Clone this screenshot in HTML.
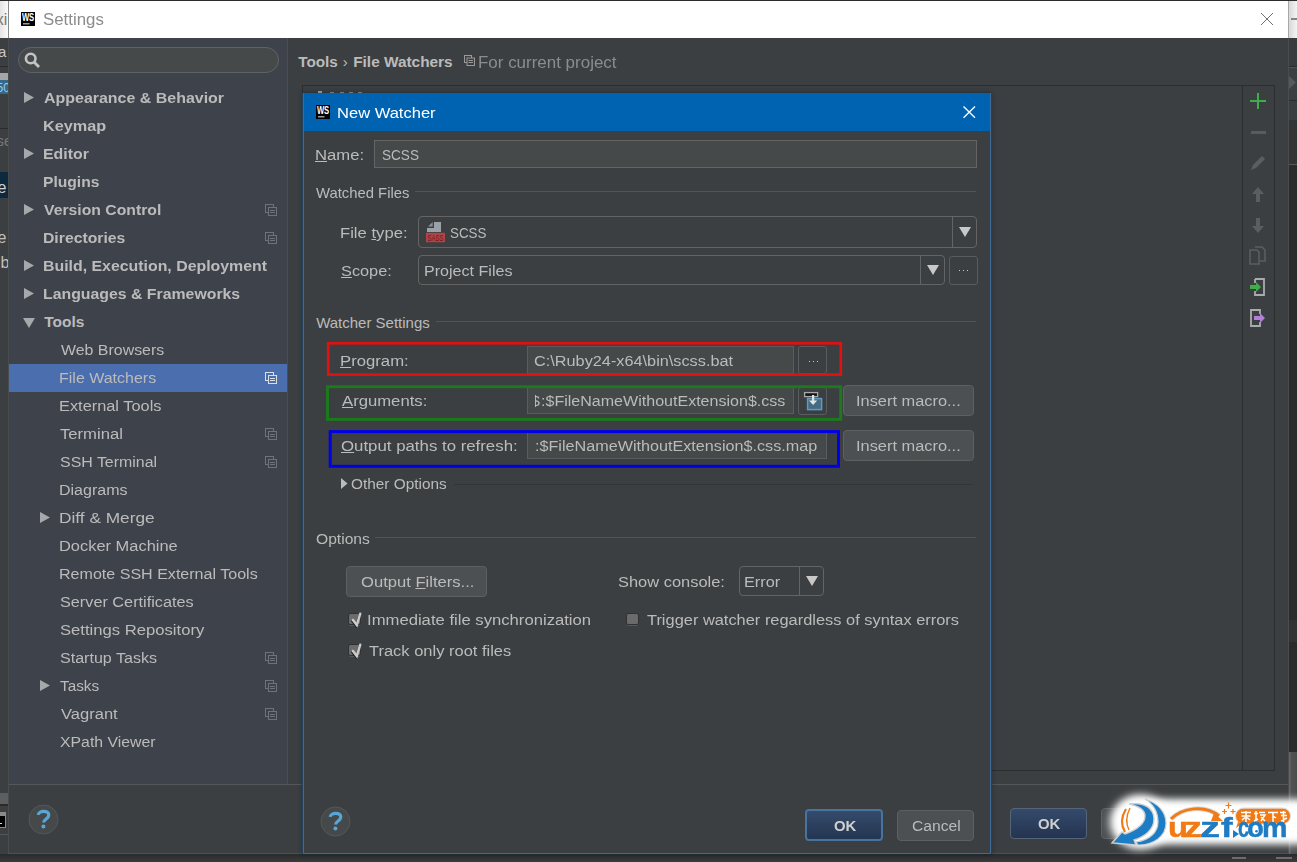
<!DOCTYPE html>
<html><head><meta charset="utf-8"><style>
html,body{margin:0;padding:0;width:1297px;height:862px;overflow:hidden;background:#3c3f41}
.r{position:absolute;display:block}
.t{position:absolute;white-space:pre;line-height:1;font-family:"Liberation Sans",sans-serif}
u{text-decoration:underline;text-underline-offset:1px}
</style></head><body>
<div class="r" style="left:0px;top:0px;width:1297px;height:862px;background:#3c3f41"></div>
<div class="r" style="left:0px;top:0px;width:1297px;height:1px;background:#2b2b2b"></div>
<div class="r" style="left:1289px;top:1px;width:8px;height:37px;background:linear-gradient(90deg,#d8d8d8,#f4f4f4)"></div>
<div class="r" style="left:1291px;top:18px;width:6px;height:1.5px;background:#858585"></div>
<div class="r" style="left:1289px;top:38px;width:8px;height:28px;background:#393c3e"></div>
<div class="r" style="left:1289px;top:66px;width:8px;height:1px;background:#2b2b2b"></div>
<div class="r" style="left:1289px;top:67px;width:8px;height:1px;background:#505355"></div>
<div class="r" style="left:1289px;top:68px;width:8px;height:32px;background:#3c3f41"></div>
<svg class="r" style="left:1289px;top:76px" width="8" height="13"><path d="M0 0L7 6.5L0 13Z" fill="#56595b"/></svg>
<div class="r" style="left:1289px;top:100px;width:8px;height:1px;background:#2b2b2b"></div>
<div class="r" style="left:1289px;top:101px;width:8px;height:19px;background:#3c3f41"></div>
<div class="r" style="left:1289px;top:120px;width:8px;height:44px;background:#323436"></div>
<div class="r" style="left:1289px;top:164px;width:8px;height:1px;background:#555759"></div>
<div class="r" style="left:1289px;top:165px;width:8px;height:587px;background:#2b2b2b"></div>
<div class="r" style="left:1289px;top:620px;width:8px;height:22px;background:#333333"></div>
<div class="r" style="left:1289px;top:752px;width:8px;height:110px;background:linear-gradient(90deg,#6a6c6e,#505254 30%,#4a4c4e)"></div>
<div class="r" style="left:0px;top:1px;width:8px;height:37px;background:linear-gradient(90deg,#e4e4e4,#fafafa)"></div>
<div class="t" style="left:-4.19px;top:12px;font-size:16px;font-weight:normal;color:#777;">xi</div>
<div class="r" style="left:0px;top:38px;width:8px;height:90px;background:#3c3f41"></div>
<div class="t" style="left:-2.13px;top:44px;font-size:15px;font-weight:normal;color:#c8c8c8;">a</div>
<div class="r" style="left:0px;top:66px;width:8px;height:1px;background:#2b2b2b"></div>
<div class="r" style="left:0px;top:73px;width:8px;height:7px;background:#a3a7ab"></div>
<div class="r" style="left:0px;top:80px;width:8px;height:14px;background:#36688a"></div>
<div class="t" style="left:-3.48px;top:82px;font-size:12px;font-weight:normal;color:#8fd0f5;">50</div>
<div class="r" style="left:0px;top:128px;width:8px;height:1px;background:#2b2b2b"></div>
<div class="t" style="left:-3.42px;top:133px;font-size:15px;font-weight:normal;color:#75787a;">se</div>
<div class="r" style="left:0px;top:172px;width:8px;height:26px;background:#0d293e"></div>
<div class="t" style="left:-6.09px;top:180px;font-size:16px;font-weight:normal;color:#d0d0d0;">le</div>
<div class="t" style="left:-6.09px;top:230px;font-size:16px;font-weight:normal;color:#c0c0c0;">le</div>
<div class="t" style="left:-3.06px;top:255px;font-size:16px;font-weight:normal;color:#c0c0c0;">ib</div>
<div class="r" style="left:0px;top:793px;width:8px;height:11px;background:#5c5e60"></div>
<div class="r" style="left:0px;top:804px;width:8px;height:2px;background:#2b2b2b"></div>
<div class="r" style="left:0px;top:812px;width:6px;height:16px;background:#8a8a8a"></div>
<div class="r" style="left:0px;top:816px;width:5px;height:11px;background:#000"></div>
<div class="r" style="left:0px;top:822.5px;width:2px;height:1.5px;background:#ddd"></div>
<div class="r" style="left:0px;top:834px;width:8px;height:1px;background:#555"></div>
<div class="r" style="left:8px;top:1px;width:1px;height:37px;background:#8a8a8a"></div>
<div class="r" style="left:8px;top:38px;width:1px;height:816px;background:#4a4c4e"></div>
<div class="r" style="left:9px;top:1px;width:1280px;height:37px;background:#ffffff"></div>
<div class="r" style="left:1288px;top:1px;width:1px;height:37px;background:#a8a8a8"></div>
<div class="r" style="left:1288px;top:38px;width:1px;height:816px;background:#4a4c4e"></div>
<svg class="r" style="left:21px;top:12px" width="14" height="14"><rect width="14" height="14" fill="#000"/><text x="0.9" y="9.2" font-family="Liberation Sans" font-weight="bold" font-size="10.4" fill="#fff" textLength="12.3" lengthAdjust="spacingAndGlyphs">WS</text><rect x="2" y="11" width="6.5" height="1.5" fill="#9a9a9a"/></svg>
<div class="t" style="left:42.73px;top:12px;font-size:16px;font-weight:normal;color:#8c8c8c;transform:scaleX(1.0529);transform-origin:0 0;">Settings</div>
<svg class="r" style="left:1260px;top:12px" width="14" height="14"><path d="M1 1L13 13M13 1L1 13" stroke="#707070" stroke-width="1"/></svg>
<div class="r" style="left:9px;top:38px;width:278px;height:746px;background:#3e434b"></div>
<div class="r" style="left:287px;top:38px;width:1px;height:746px;background:#4a4e53"></div>
<div class="r" style="left:18px;top:47px;width:261px;height:26px;background:#45494a;border:1px solid #5f6367;border-radius:13px;box-sizing:border-box"></div>
<svg class="r" style="left:22px;top:50px" width="20" height="20"><circle cx="8.7" cy="8.5" r="4.8" fill="none" stroke="#c3c3c3" stroke-width="2.6"/><path d="M12 12L17 17" stroke="#c3c3c3" stroke-width="2.8"/></svg>
<div class="t" style="left:44.09px;top:90px;font-size:15.5px;font-weight:bold;color:#bbbbbb;transform:scaleX(1.0297);transform-origin:0 0;">Appearance &amp; Behavior</div>
<svg class="r" style="left:24px;top:92px" width="11" height="12"><path d="M0 0L10 5.5L0 11Z" fill="#a6a9ac"/></svg>
<div class="t" style="left:43.43px;top:118px;font-size:15.5px;font-weight:bold;color:#bbbbbb;transform:scaleX(1.0486);transform-origin:0 0;">Keymap</div>
<div class="t" style="left:43.45px;top:146px;font-size:15.5px;font-weight:bold;color:#bbbbbb;transform:scaleX(1.0247);transform-origin:0 0;">Editor</div>
<svg class="r" style="left:24px;top:148px" width="11" height="12"><path d="M0 0L10 5.5L0 11Z" fill="#a6a9ac"/></svg>
<div class="t" style="left:43.47px;top:174px;font-size:15.5px;font-weight:bold;color:#bbbbbb;transform:scaleX(1.0084);transform-origin:0 0;">Plugins</div>
<div class="t" style="left:44.41px;top:202px;font-size:15.5px;font-weight:bold;color:#bbbbbb;transform:scaleX(1.0163);transform-origin:0 0;">Version Control</div>
<svg class="r" style="left:24px;top:204px" width="11" height="12"><path d="M0 0L10 5.5L0 11Z" fill="#a6a9ac"/></svg>
<svg class="r" style="left:265px;top:204px" width="12" height="12"><rect x="0.5" y="0.5" width="8" height="8" fill="none" stroke="#6f7276" stroke-width="1"/><rect x="3.5" y="3.5" width="8" height="8" fill="#3e434b" stroke="#6f7276" stroke-width="1"/><path d="M5 6.5H10M5 8.5H10" stroke="#6f7276" stroke-width="1"/></svg>
<div class="t" style="left:43.46px;top:230px;font-size:15.5px;font-weight:bold;color:#bbbbbb;transform:scaleX(1.0160);transform-origin:0 0;">Directories</div>
<svg class="r" style="left:265px;top:232px" width="12" height="12"><rect x="0.5" y="0.5" width="8" height="8" fill="none" stroke="#6f7276" stroke-width="1"/><rect x="3.5" y="3.5" width="8" height="8" fill="#3e434b" stroke="#6f7276" stroke-width="1"/><path d="M5 6.5H10M5 8.5H10" stroke="#6f7276" stroke-width="1"/></svg>
<div class="t" style="left:43.45px;top:258px;font-size:15.5px;font-weight:bold;color:#bbbbbb;transform:scaleX(1.0241);transform-origin:0 0;">Build, Execution, Deployment</div>
<svg class="r" style="left:24px;top:260px" width="11" height="12"><path d="M0 0L10 5.5L0 11Z" fill="#a6a9ac"/></svg>
<div class="t" style="left:43.45px;top:286px;font-size:15.5px;font-weight:bold;color:#bbbbbb;transform:scaleX(1.0219);transform-origin:0 0;">Languages &amp; Frameworks</div>
<svg class="r" style="left:24px;top:288px" width="11" height="12"><path d="M0 0L10 5.5L0 11Z" fill="#a6a9ac"/></svg>
<div class="t" style="left:44.31px;top:314px;font-size:15.5px;font-weight:bold;color:#bbbbbb;">Tools</div>
<svg class="r" style="left:23px;top:318px" width="13" height="11"><path d="M0 0L12 0L6 10Z" fill="#a6a9ac"/></svg>
<div class="t" style="left:60.74px;top:342px;font-size:15.5px;font-weight:normal;color:#bbbbbb;transform:scaleX(1.0272);transform-origin:0 0;">Web Browsers</div>
<div class="r" style="left:9px;top:364px;width:278px;height:28px;background:#4b6eaf"></div>
<div class="t" style="left:59.49px;top:370px;font-size:15.5px;font-weight:normal;color:#bbbbbb;transform:scaleX(1.0320);transform-origin:0 0;">File Watchers</div>
<svg class="r" style="left:265px;top:372px" width="12" height="12"><rect x="0.5" y="0.5" width="8" height="8" fill="none" stroke="#d8dde6" stroke-width="1"/><rect x="3.5" y="3.5" width="8" height="8" fill="#4b6eaf" stroke="#d8dde6" stroke-width="1"/><path d="M5 6.5H10M5 8.5H10" stroke="#d8dde6" stroke-width="1"/></svg>
<div class="t" style="left:59.46px;top:398px;font-size:15.5px;font-weight:normal;color:#bbbbbb;transform:scaleX(1.0553);transform-origin:0 0;">External Tools</div>
<div class="t" style="left:60.43px;top:426px;font-size:15.5px;font-weight:normal;color:#bbbbbb;transform:scaleX(1.0735);transform-origin:0 0;">Terminal</div>
<svg class="r" style="left:265px;top:428px" width="12" height="12"><rect x="0.5" y="0.5" width="8" height="8" fill="none" stroke="#6f7276" stroke-width="1"/><rect x="3.5" y="3.5" width="8" height="8" fill="#3e434b" stroke="#6f7276" stroke-width="1"/><path d="M5 6.5H10M5 8.5H10" stroke="#6f7276" stroke-width="1"/></svg>
<div class="t" style="left:60.07px;top:454px;font-size:15.5px;font-weight:normal;color:#bbbbbb;transform:scaleX(1.0278);transform-origin:0 0;">SSH Terminal</div>
<svg class="r" style="left:265px;top:456px" width="12" height="12"><rect x="0.5" y="0.5" width="8" height="8" fill="none" stroke="#6f7276" stroke-width="1"/><rect x="3.5" y="3.5" width="8" height="8" fill="#3e434b" stroke="#6f7276" stroke-width="1"/><path d="M5 6.5H10M5 8.5H10" stroke="#6f7276" stroke-width="1"/></svg>
<div class="t" style="left:59.49px;top:482px;font-size:15.5px;font-weight:normal;color:#bbbbbb;transform:scaleX(1.0329);transform-origin:0 0;">Diagrams</div>
<div class="t" style="left:59.38px;top:510px;font-size:15.5px;font-weight:normal;color:#bbbbbb;transform:scaleX(1.1146);transform-origin:0 0;">Diff &amp; Merge</div>
<svg class="r" style="left:40px;top:512px" width="11" height="12"><path d="M0 0L10 5.5L0 11Z" fill="#a6a9ac"/></svg>
<div class="t" style="left:59.45px;top:538px;font-size:15.5px;font-weight:normal;color:#bbbbbb;transform:scaleX(1.0598);transform-origin:0 0;">Docker Machine</div>
<div class="t" style="left:59.48px;top:566px;font-size:15.5px;font-weight:normal;color:#bbbbbb;transform:scaleX(1.0358);transform-origin:0 0;">Remote SSH External Tools</div>
<div class="t" style="left:60.05px;top:594px;font-size:15.5px;font-weight:normal;color:#bbbbbb;transform:scaleX(1.0483);transform-origin:0 0;">Server Certificates</div>
<div class="t" style="left:60.03px;top:622px;font-size:15.5px;font-weight:normal;color:#bbbbbb;transform:scaleX(1.0738);transform-origin:0 0;">Settings Repository</div>
<div class="t" style="left:60.06px;top:650px;font-size:15.5px;font-weight:normal;color:#bbbbbb;transform:scaleX(1.0363);transform-origin:0 0;">Startup Tasks</div>
<svg class="r" style="left:265px;top:652px" width="12" height="12"><rect x="0.5" y="0.5" width="8" height="8" fill="none" stroke="#6f7276" stroke-width="1"/><rect x="3.5" y="3.5" width="8" height="8" fill="#3e434b" stroke="#6f7276" stroke-width="1"/><path d="M5 6.5H10M5 8.5H10" stroke="#6f7276" stroke-width="1"/></svg>
<div class="t" style="left:60.46px;top:678px;font-size:15.5px;font-weight:normal;color:#bbbbbb;transform:scaleX(0.9892);transform-origin:0 0;">Tasks</div>
<svg class="r" style="left:40px;top:680px" width="11" height="12"><path d="M0 0L10 5.5L0 11Z" fill="#a6a9ac"/></svg>
<svg class="r" style="left:265px;top:680px" width="12" height="12"><rect x="0.5" y="0.5" width="8" height="8" fill="none" stroke="#6f7276" stroke-width="1"/><rect x="3.5" y="3.5" width="8" height="8" fill="#3e434b" stroke="#6f7276" stroke-width="1"/><path d="M5 6.5H10M5 8.5H10" stroke="#6f7276" stroke-width="1"/></svg>
<div class="t" style="left:60.73px;top:706px;font-size:15.5px;font-weight:normal;color:#bbbbbb;transform:scaleX(1.0671);transform-origin:0 0;">Vagrant</div>
<svg class="r" style="left:265px;top:708px" width="12" height="12"><rect x="0.5" y="0.5" width="8" height="8" fill="none" stroke="#6f7276" stroke-width="1"/><rect x="3.5" y="3.5" width="8" height="8" fill="#3e434b" stroke="#6f7276" stroke-width="1"/><path d="M5 6.5H10M5 8.5H10" stroke="#6f7276" stroke-width="1"/></svg>
<div class="t" style="left:60.45px;top:734px;font-size:15.5px;font-weight:normal;color:#bbbbbb;transform:scaleX(1.0201);transform-origin:0 0;">XPath Viewer</div>
<div class="r" style="left:9px;top:784px;width:1279px;height:1px;background:#555759"></div>
<div class="r" style="left:9px;top:785px;width:1279px;height:68px;background:#3c3f41"></div>
<svg class="r" style="left:28px;top:804px" width="31" height="31"><circle cx="15.5" cy="15.5" r="14.5" fill="#45494a" stroke="#55585b" stroke-width="1"/><path d="M10.2 10.8C10.5 6.6 20.8 5.6 20.8 11C20.8 14.8 15.6 15 15.6 18.6" fill="none" stroke="#58a6d8" stroke-width="3.2"/><circle cx="15.4" cy="22.6" r="2" fill="#58a6d8"/></svg>
<div class="r" style="left:9px;top:853px;width:1280px;height:1px;background:#4e5052"></div>
<div class="r" style="left:0px;top:854px;width:1297px;height:8px;background:linear-gradient(#292a2b,#3a3b3c)"></div>
<div class="r" style="left:1232px;top:857px;width:14px;height:2px;background:#6a6c6e"></div>
<div class="r" style="left:1276px;top:857px;width:16px;height:2px;background:#6a6c6e"></div>
<div class="t" style="left:298.22px;top:54px;font-size:15.3px;font-weight:bold;color:#bbbbbb;">Tools</div>
<div class="t" style="left:342.84px;top:54px;font-size:15px;font-weight:normal;color:#bbbbbb;">›</div>
<div class="t" style="left:353.18px;top:54px;font-size:15.4px;font-weight:bold;color:#bbbbbb;">File Watchers</div>
<svg class="r" style="left:464px;top:55px" width="11" height="11"><rect x="0.5" y="0.5" width="7" height="7" fill="none" stroke="#9a9a9a"/><rect x="3" y="3" width="7.5" height="7.5" fill="#3c3f41" stroke="#9a9a9a"/><path d="M4.5 5.5H9M4.5 7.5H9" stroke="#9a9a9a"/></svg>
<div class="t" style="left:477.91px;top:55px;font-size:16px;font-weight:normal;color:#8a8d8f;transform:scaleX(1.0597);transform-origin:0 0;">For current project</div>
<div class="r" style="left:302px;top:85px;width:973px;height:686px;border:1px solid #2b2d2f;box-sizing:border-box"></div>
<div class="r" style="left:1242px;top:86px;width:1px;height:684px;background:#2b2d2f"></div>
<svg class="r" style="left:1249px;top:92px" width="18" height="18"><path d="M9 1V17M1 9H17" stroke="#3fae49" stroke-width="2"/></svg>
<div class="r" style="left:1251px;top:131px;width:15px;height:3px;background:#595c5e"></div>
<svg class="r" style="left:1249px;top:154px" width="18" height="18"><path d="M2 16L4 11L13 2L16 5L7 14Z" fill="#5b5e60"/></svg>
<svg class="r" style="left:1250px;top:186px" width="16" height="18"><path d="M8 1L14 8H10V16H6V8H2Z" fill="#5b5e60"/></svg>
<svg class="r" style="left:1250px;top:217px" width="16" height="18"><path d="M8 16L14 9H10V1H6V9H2Z" fill="#5b5e60"/></svg>
<svg class="r" style="left:1249px;top:246px" width="18" height="20"><path d="M1 4H8L10 6V18H1Z" fill="none" stroke="#5b5e60" stroke-width="1.6"/><path d="M6 1H13L16 4V15H11" fill="none" stroke="#5b5e60" stroke-width="1.6"/></svg>
<svg class="r" style="left:1249px;top:277px" width="18" height="20"><path d="M6 2H15V18H6V14" fill="none" stroke="#a9abad" stroke-width="1.8"/><path d="M6 6V2" stroke="#a9abad" stroke-width="1.8"/><path d="M1 8H7V5L12 10L7 15V12H1Z" fill="#3fae49"/></svg>
<svg class="r" style="left:1249px;top:308px" width="18" height="20"><path d="M11 6V2H2V18H11V14" fill="none" stroke="#a9abad" stroke-width="1.8"/><path d="M5 8H11V5L16 10L11 15V12H5Z" fill="#b27fd6"/></svg>
<div class="r" style="left:1010px;top:808px;width:77px;height:31px;background:linear-gradient(#354a6b,#233450);border:1px solid #56647a;border-radius:4px;box-sizing:border-box"></div>
<div class="t" style="left:1038.00px;top:816px;font-size:15.5px;font-weight:bold;color:#cfcfcf;transform:scaleX(0.9611);transform-origin:0 0;">OK</div>
<div class="r" style="left:1101px;top:808px;width:80px;height:31px;background:#4c5052;border:1px solid #5e6060;border-radius:4px;box-sizing:border-box"></div>
<div class="r" style="left:318px;top:91px;width:4px;height:2px;background:#b0b0b0"></div>
<div class="r" style="left:330px;top:92px;width:4px;height:1px;background:#9a9a9a"></div>
<div class="r" style="left:340px;top:92px;width:4px;height:1px;background:#9a9a9a"></div>
<div class="r" style="left:349px;top:92px;width:4px;height:1px;background:#9a9a9a"></div>
<div class="r" style="left:358px;top:92px;width:4px;height:1px;background:#9a9a9a"></div>
<div class="r" style="left:303px;top:93px;width:688px;height:761px;background:#3c3f41;border:1px solid #3f6b96;box-sizing:border-box;box-shadow:0 0 4px 1px rgba(10,30,50,0.45)"></div>
<div class="r" style="left:302px;top:93px;width:1px;height:761px;background:#22415e"></div>
<div class="r" style="left:991px;top:93px;width:1px;height:761px;background:#22415e"></div>
<div class="r" style="left:304px;top:93px;width:686px;height:38px;background:#0063b1"></div>
<svg class="r" style="left:316px;top:105px" width="14" height="14"><rect width="14" height="14" fill="#000"/><text x="0.9" y="9.2" font-family="Liberation Sans" font-weight="bold" font-size="10.4" fill="#fff" textLength="12.3" lengthAdjust="spacingAndGlyphs">WS</text><rect x="2" y="11" width="6.5" height="1.5" fill="#9a9a9a"/></svg>
<div class="t" style="left:337.34px;top:105px;font-size:15.5px;font-weight:normal;color:#ffffff;transform:scaleX(1.0668);transform-origin:0 0;">New Watcher</div>
<svg class="r" style="left:962px;top:105px" width="15" height="15"><path d="M1.5 1.5L13 12.8M13 1.5L1.5 12.8" stroke="#f4fbff" stroke-width="1.4"/></svg>
<div class="t" style="left:314.73px;top:147px;font-size:15.5px;font-weight:normal;color:#bbbbbb;transform:scaleX(1.0753);transform-origin:0 0;"><u>N</u>ame:</div>
<div class="r" style="left:374px;top:140px;width:603px;height:28px;background:#45494a;border:1px solid #646464;box-sizing:border-box"></div>
<div class="t" style="left:381.88px;top:147px;font-size:15.5px;font-weight:normal;color:#bbbbbb;transform:scaleX(0.8751);transform-origin:0 0;">SCSS</div>
<div class="t" style="left:316.04px;top:185px;font-size:15px;font-weight:normal;color:#bbbbbb;transform:scaleX(0.9886);transform-origin:0 0;">Watched Files</div>
<div class="r" style="left:415px;top:191px;width:561px;height:1px;background:#515456"></div>
<div class="t" style="left:340.34px;top:225px;font-size:15.5px;font-weight:normal;color:#bbbbbb;transform:scaleX(1.0731);transform-origin:0 0;">File <u>t</u>ype:</div>
<div class="r" style="left:418px;top:216px;width:559px;height:32px;background:#3c3f41;border:1px solid #646464;border-radius:4px;box-sizing:border-box"></div>
<div class="r" style="left:952px;top:217px;width:1px;height:30px;background:#646464"></div>
<svg class="r" style="left:959px;top:227px" width="12" height="10"><path d="M0 0H12L6 10Z" fill="#c8c8c8"/></svg>
<svg class="r" style="left:426px;top:222px" width="20" height="21"><path d="M8 0H15V10H1V6H8Z" fill="#9aa2a8"/><path d="M2 4.6L6.7 0V4.6Z" fill="#8a9197"/><rect x="0" y="10.8" width="19" height="9.4" fill="#b04547"/><text x="1.5" y="18.7" font-family="Liberation Sans" font-size="8.4" fill="#6a1718" textLength="16" lengthAdjust="spacingAndGlyphs">SASS</text></svg>
<div class="t" style="left:450.18px;top:225px;font-size:15.5px;font-weight:normal;color:#bbbbbb;transform:scaleX(0.8628);transform-origin:0 0;">SCSS</div>
<div class="t" style="left:340.95px;top:263px;font-size:15.5px;font-weight:normal;color:#bbbbbb;transform:scaleX(1.0514);transform-origin:0 0;"><u>S</u>cope:</div>
<div class="r" style="left:418px;top:255px;width:527px;height:30px;background:#3c3f41;border:1px solid #646464;border-radius:4px;box-sizing:border-box"></div>
<div class="r" style="left:920px;top:256px;width:1px;height:28px;background:#646464"></div>
<svg class="r" style="left:927px;top:265px" width="12" height="10"><path d="M0 0H12L6 10Z" fill="#c8c8c8"/></svg>
<div class="t" style="left:423.58px;top:263px;font-size:15.5px;font-weight:normal;color:#bbbbbb;transform:scaleX(1.0377);transform-origin:0 0;">Project Files</div>
<div class="r" style="left:949px;top:256px;width:29px;height:29px;background:#3c3f41;border:1px solid #5a5d60;border-radius:3px;box-sizing:border-box"></div>
<div class="r" style="left:959px;top:270px;width:1.3px;height:1.3px;background:#c8c8c8"></div>
<div class="r" style="left:963px;top:270px;width:1.3px;height:1.3px;background:#c8c8c8"></div>
<div class="r" style="left:967px;top:270px;width:1.3px;height:1.3px;background:#c8c8c8"></div>
<div class="t" style="left:316.14px;top:315px;font-size:15px;font-weight:normal;color:#bbbbbb;">Watcher Settings</div>
<div class="r" style="left:436px;top:321px;width:540px;height:1px;background:#515456"></div>
<div class="t" style="left:340.33px;top:353px;font-size:15.5px;font-weight:normal;color:#bbbbbb;transform:scaleX(1.0780);transform-origin:0 0;"><u>P</u>rogram:</div>
<div class="r" style="left:527px;top:346px;width:267px;height:28px;background:#45494a;border:1px solid #5a5d5f;box-sizing:border-box"></div>
<div class="t" style="left:534.49px;top:353px;font-size:15.5px;font-weight:normal;color:#bbbbbb;transform:scaleX(1.0502);transform-origin:0 0;">C:\Ruby24-x64\bin\scss.bat</div>
<div class="r" style="left:798px;top:346px;width:29px;height:28px;background:#3c3f41;border:1px solid #5a5d60;border-radius:3px;box-sizing:border-box"></div>
<div class="r" style="left:808.5px;top:360.5px;width:1.3px;height:1.3px;background:#c8c8c8"></div>
<div class="r" style="left:812.5px;top:360.5px;width:1.3px;height:1.3px;background:#c8c8c8"></div>
<div class="r" style="left:816.5px;top:360.5px;width:1.3px;height:1.3px;background:#c8c8c8"></div>
<div class="t" style="left:341.67px;top:393px;font-size:15.5px;font-weight:normal;color:#bbbbbb;transform:scaleX(1.0757);transform-origin:0 0;"><u>A</u>rguments:</div>
<div class="r" style="left:527px;top:387px;width:267px;height:27px;background:#45494a;border:1px solid #5a5d5f;box-sizing:border-box;overflow:hidden"></div>
<div class="r" style="left:535px;top:388px;width:8px;height:25px;overflow:hidden">
<div class="t" style="left:-3.66px;top:5px;font-size:15.5px;font-weight:normal;color:#bbbbbb;transform:scaleX(1.0347);transform-origin:0 0;">$</div>
</div>
<div class="t" style="left:540.72px;top:393px;font-size:15.5px;font-weight:normal;color:#bbbbbb;transform:scaleX(1.0352);transform-origin:0 0;">:$FileNameWithoutExtension$.css</div>
<div class="r" style="left:798px;top:387px;width:29px;height:28px;background:#3c3f41;border:1px solid #5a5d60;border-radius:3px;box-sizing:border-box"></div>
<svg class="r" style="left:803px;top:391px" width="21" height="21"><rect x="1.6" y="1.6" width="13" height="4" fill="#151515" stroke="#a8a8a8" stroke-width="1.3"/><rect x="4.6" y="7.6" width="14" height="11" fill="#456a82" stroke="#5b9bc4" stroke-width="1.5"/><rect x="9" y="4" width="2.2" height="7" fill="#e2e2e2"/><path d="M6 9.5H14.2L10.1 14Z" fill="#e2e2e2"/></svg>
<div class="r" style="left:843px;top:385px;width:131px;height:31px;background:#4c5052;border:1px solid #5e6060;border-radius:4px;box-sizing:border-box"></div>
<div class="t" style="left:855.89px;top:393px;font-size:15.5px;font-weight:normal;color:#bbbbbb;transform:scaleX(1.0572);transform-origin:0 0;">Insert macro...</div>
<div class="t" style="left:340.69px;top:438px;font-size:15.5px;font-weight:normal;color:#bbbbbb;transform:scaleX(1.0848);transform-origin:0 0;"><u>O</u>utput paths to refresh:</div>
<div class="r" style="left:527px;top:432px;width:300px;height:27px;background:#45494a;border:1px solid #5a5d5f;box-sizing:border-box"></div>
<div class="t" style="left:534.51px;top:438px;font-size:15.5px;font-weight:normal;color:#bbbbbb;transform:scaleX(1.0431);transform-origin:0 0;">:$FileNameWithoutExtension$.css.map</div>
<div class="r" style="left:843px;top:430px;width:131px;height:31px;background:#4c5052;border:1px solid #5e6060;border-radius:4px;box-sizing:border-box"></div>
<div class="t" style="left:855.89px;top:438px;font-size:15.5px;font-weight:normal;color:#bbbbbb;transform:scaleX(1.0572);transform-origin:0 0;">Insert macro...</div>
<svg class="r" style="left:320px;top:335px" width="530" height="140" viewBox="320 335 530 140"><rect x="328.2" y="343.3" width="512.6" height="31.3" fill="none" stroke="#de1212" stroke-width="2.7"/><rect x="327.5" y="386.7" width="513.2" height="32.7" fill="none" stroke="#1c7a1c" stroke-width="2.9"/><rect x="330.2" y="431.6" width="508.3" height="34.7" fill="none" stroke="#0000e6" stroke-width="3"/></svg>
<svg class="r" style="left:341px;top:478px" width="7" height="11"><path d="M0 0L6.5 5.5L0 11Z" fill="#bbbbbb"/></svg>
<div class="t" style="left:350.86px;top:476px;font-size:15px;font-weight:normal;color:#bbbbbb;transform:scaleX(1.0246);transform-origin:0 0;">Other Options</div>
<div class="r" style="left:454px;top:484px;width:518px;height:1px;background:#323436"></div>
<div class="t" style="left:315.65px;top:531px;font-size:15.5px;font-weight:normal;color:#bbbbbb;transform:scaleX(1.0075);transform-origin:0 0;">Options</div>
<div class="r" style="left:375px;top:537px;width:601px;height:1px;background:#515456"></div>
<div class="r" style="left:346px;top:566px;width:141px;height:31px;background:#4c5052;border:1px solid #5e6060;border-radius:4px;box-sizing:border-box"></div>
<div class="t" style="left:360.50px;top:574px;font-size:15.5px;font-weight:normal;color:#bbbbbb;transform:scaleX(1.0705);transform-origin:0 0;">Output <u>F</u>ilters...</div>
<div class="t" style="left:618.24px;top:574px;font-size:15.5px;font-weight:normal;color:#bbbbbb;transform:scaleX(1.0601);transform-origin:0 0;">Show console:</div>
<div class="r" style="left:739px;top:566px;width:85px;height:30px;background:#3c3f41;border:1px solid #646464;border-radius:4px;box-sizing:border-box"></div>
<div class="r" style="left:799px;top:567px;width:1px;height:28px;background:#646464"></div>
<svg class="r" style="left:806px;top:576px" width="12" height="10"><path d="M0 0H12L6 10Z" fill="#c8c8c8"/></svg>
<div class="t" style="left:744.26px;top:574px;font-size:15.5px;font-weight:normal;color:#bbbbbb;transform:scaleX(1.0510);transform-origin:0 0;">Error</div>
<svg class="r" style="left:347px;top:612px" width="16" height="16"><rect x="1.5" y="1.5" width="12" height="11" rx="2" fill="none" stroke="#2f3133" stroke-width="1"/><rect x="2" y="2" width="11" height="10" rx="1.5" fill="#6b6b6b"/><path d="M2.5 13.5H12.5" stroke="#56595b" stroke-width="1"/><path d="M5.9 8.4L9.8 13.4L13 2.6" stroke="#1a1a1a" stroke-width="2.2" fill="none" transform="translate(-0.5,0.8)" stroke-linecap="round"/><path d="M5.9 7.9L9.8 13L13.2 1.8" stroke="#c9c9c9" stroke-width="2.5" fill="none" stroke-linecap="round"/></svg>
<div class="t" style="left:366.57px;top:612px;font-size:15.5px;font-weight:normal;color:#bbbbbb;transform:scaleX(1.0749);transform-origin:0 0;">Immediate file synchronization</div>
<svg class="r" style="left:625px;top:612px" width="16" height="16"><rect x="1.5" y="1.5" width="12" height="11" rx="2" fill="none" stroke="#2f3133" stroke-width="1"/><rect x="2" y="2" width="11" height="10" rx="1.5" fill="#6b6b6b"/><path d="M2.5 13.5H12.5" stroke="#56595b" stroke-width="1"/></svg>
<div class="t" style="left:646.54px;top:612px;font-size:15.5px;font-weight:normal;color:#bbbbbb;transform:scaleX(1.0581);transform-origin:0 0;">Trigger watcher regardless of syntax errors</div>
<svg class="r" style="left:347px;top:643px" width="16" height="16"><rect x="1.5" y="1.5" width="12" height="11" rx="2" fill="none" stroke="#2f3133" stroke-width="1"/><rect x="2" y="2" width="11" height="10" rx="1.5" fill="#6b6b6b"/><path d="M2.5 13.5H12.5" stroke="#56595b" stroke-width="1"/><path d="M5.9 8.4L9.8 13.4L13 2.6" stroke="#1a1a1a" stroke-width="2.2" fill="none" transform="translate(-0.5,0.8)" stroke-linecap="round"/><path d="M5.9 7.9L9.8 13L13.2 1.8" stroke="#c9c9c9" stroke-width="2.5" fill="none" stroke-linecap="round"/></svg>
<div class="t" style="left:368.74px;top:643px;font-size:15.5px;font-weight:normal;color:#bbbbbb;transform:scaleX(1.0632);transform-origin:0 0;">Track only root files</div>
<svg class="r" style="left:320px;top:806px" width="31" height="31"><circle cx="15.5" cy="15.5" r="14.5" fill="#45494a" stroke="#55585b" stroke-width="1"/><path d="M10.2 10.8C10.5 6.6 20.8 5.6 20.8 11C20.8 14.8 15.6 15 15.6 18.6" fill="none" stroke="#58a6d8" stroke-width="3.2"/><circle cx="15.4" cy="22.6" r="2" fill="#58a6d8"/></svg>
<div class="r" style="left:805px;top:809px;width:78px;height:32px;background:linear-gradient(#364b6c,#233550);border:2px solid #47739f;border-radius:4px;box-sizing:border-box"></div>
<div class="t" style="left:834.10px;top:819px;font-size:14.5px;font-weight:bold;color:#d0d0d0;transform:scaleX(1.0273);transform-origin:0 0;">OK</div>
<div class="r" style="left:897px;top:810px;width:77px;height:31px;background:#4c5052;border:1px solid #5e6060;border-radius:4px;box-sizing:border-box"></div>
<div class="t" style="left:911.82px;top:818px;font-size:15.5px;font-weight:normal;color:#bbbbbb;transform:scaleX(1.0121);transform-origin:0 0;">Cancel</div>
<svg class="r" style="left:1090px;top:782px" width="207" height="80" viewBox="1090 782 207 80">
<defs><filter id="bl" x="-20%" y="-50%" width="140%" height="200%"><feGaussianBlur stdDeviation="4.5"/></filter>
<filter id="bl2" x="-20%" y="-20%" width="140%" height="140%"><feGaussianBlur stdDeviation="0.5"/></filter></defs>
<rect x="1118" y="800" width="200" height="44" rx="20" fill="#fff" filter="url(#bl)"/>
<rect x="1140" y="803" width="170" height="36" fill="#fff" filter="url(#bl)"/>
<ellipse cx="1140" cy="822" rx="30" ry="27" fill="#fff" filter="url(#bl)"/>
<g filter="url(#bl2)">
<g transform="translate(1100,790)">
<path d="M29 14C44 12 54 18 54 29C54 40 44 47 34 50L36 55L12 53L22 42L25 44C36 40 45 34 45 26C45 19 38 16 29 14Z" fill="#1e7cc4" stroke="#d0d0d0" stroke-width="1.4"/>
<path d="M45 9C58 13 66 22 66 33C66 46 54 55 38 55L36 52C50 50 58 42 58 32C58 22 53 14 45 9Z" fill="#1e7cc4" stroke="#d0d0d0" stroke-width="1.2"/>
<path d="M26 19C21 27 21 35 25 42" fill="none" stroke="#f07a14" stroke-width="2.2"/>
<path d="M30 18C26 26 26 34 29 40" fill="none" stroke="#f07a14" stroke-width="1.4"/>
</g>
<path d="M1171 819C1182 808 1205 804 1219 816" fill="none" stroke="#dcdcdc" stroke-width="5"/>
<path d="M1171 819C1182 808 1205 804 1219 816" fill="none" stroke="#f07a14" stroke-width="3"/>
<path d="M1214 813L1223 821L1211 821Z" fill="#f07a14"/>
<path d="M1228.5 802.5V808.5M1225.5 805.5H1231.5M1224.5 809V814M1222 811.5H1227M1233 809V814M1230.5 811.5H1235.5" stroke="#f07a14" stroke-width="1.2"/>
<rect x="1235" y="807.5" width="56" height="17" rx="8.5" fill="#dcdcdc"/>
<rect x="1236" y="808.7" width="54" height="14.7" rx="7.3" fill="#f07a14"/>
<path d="M1238 822L1236 828L1243 823Z" fill="#f07a14"/>
<path d="M1241 812.5H1251M1246 811V822M1242 820L1245 817.5M1250 820L1247 817.5M1241.5 816H1250.5M1254 813.5H1258M1256 811V821M1254 821L1258 819M1259 812.5H1265M1260 815H1265L1261 821M1261 817L1265 821M1268 812.5H1278M1273 812.5V822M1273 816L1276 818M1280 812.5H1286M1281 815.5H1287M1283.5 811V822M1281 821L1287 818" stroke="#fff" stroke-width="1.5" fill="none"/>
</g>
</svg>
<div class="t" style="left:1167.58px;top:813px;font-size:28.5px;font-weight:bold;color:#f07a14;transform:scaleX(1.1454);transform-origin:0 0;-webkit-text-stroke:0.5px #f07a14;">u</div>
<div class="t" style="left:1183.97px;top:813px;font-size:28.5px;font-weight:bold;color:#f07a14;transform:scaleX(1.2579);transform-origin:0 0;-webkit-text-stroke:0.5px #f07a14;">z</div>
<div class="t" style="left:1200.40px;top:813px;font-size:28.5px;font-weight:bold;color:#1e7cc4;transform:scaleX(1.4068);transform-origin:0 0;-webkit-text-stroke:0.5px #1e7cc4;">z</div>
<div class="t" style="left:1221.44px;top:813px;font-size:28.5px;font-weight:bold;color:#1e7cc4;transform:scaleX(1.2281);transform-origin:0 0;-webkit-text-stroke:0.5px #1e7cc4;">f</div>
<div class="t" style="left:1238.04px;top:813px;font-size:28.5px;font-weight:bold;color:#1e7cc4;transform:scaleX(0.6974);transform-origin:0 0;-webkit-text-stroke:0.5px #1e7cc4;">c</div>
<div class="t" style="left:1246.95px;top:813px;font-size:28.5px;font-weight:bold;color:#1e7cc4;transform:scaleX(0.9659);transform-origin:0 0;-webkit-text-stroke:0.5px #1e7cc4;">o</div>
<div class="t" style="left:1262.31px;top:813px;font-size:28.5px;font-weight:bold;color:#1e7cc4;transform:scaleX(1.0038);transform-origin:0 0;-webkit-text-stroke:0.5px #1e7cc4;">m</div>
<svg class="r" style="left:1232px;top:829px" width="8" height="10"><path d="M1 1L7 5L1 9Z" fill="#1e7cc4"/></svg>
<svg class="r" style="left:1252px;top:827px" width="8" height="8"><circle cx="4" cy="4" r="2.6" fill="#fff"/><circle cx="4.5" cy="4.3" r="1.3" fill="#1e7cc4"/></svg>
</body></html>
